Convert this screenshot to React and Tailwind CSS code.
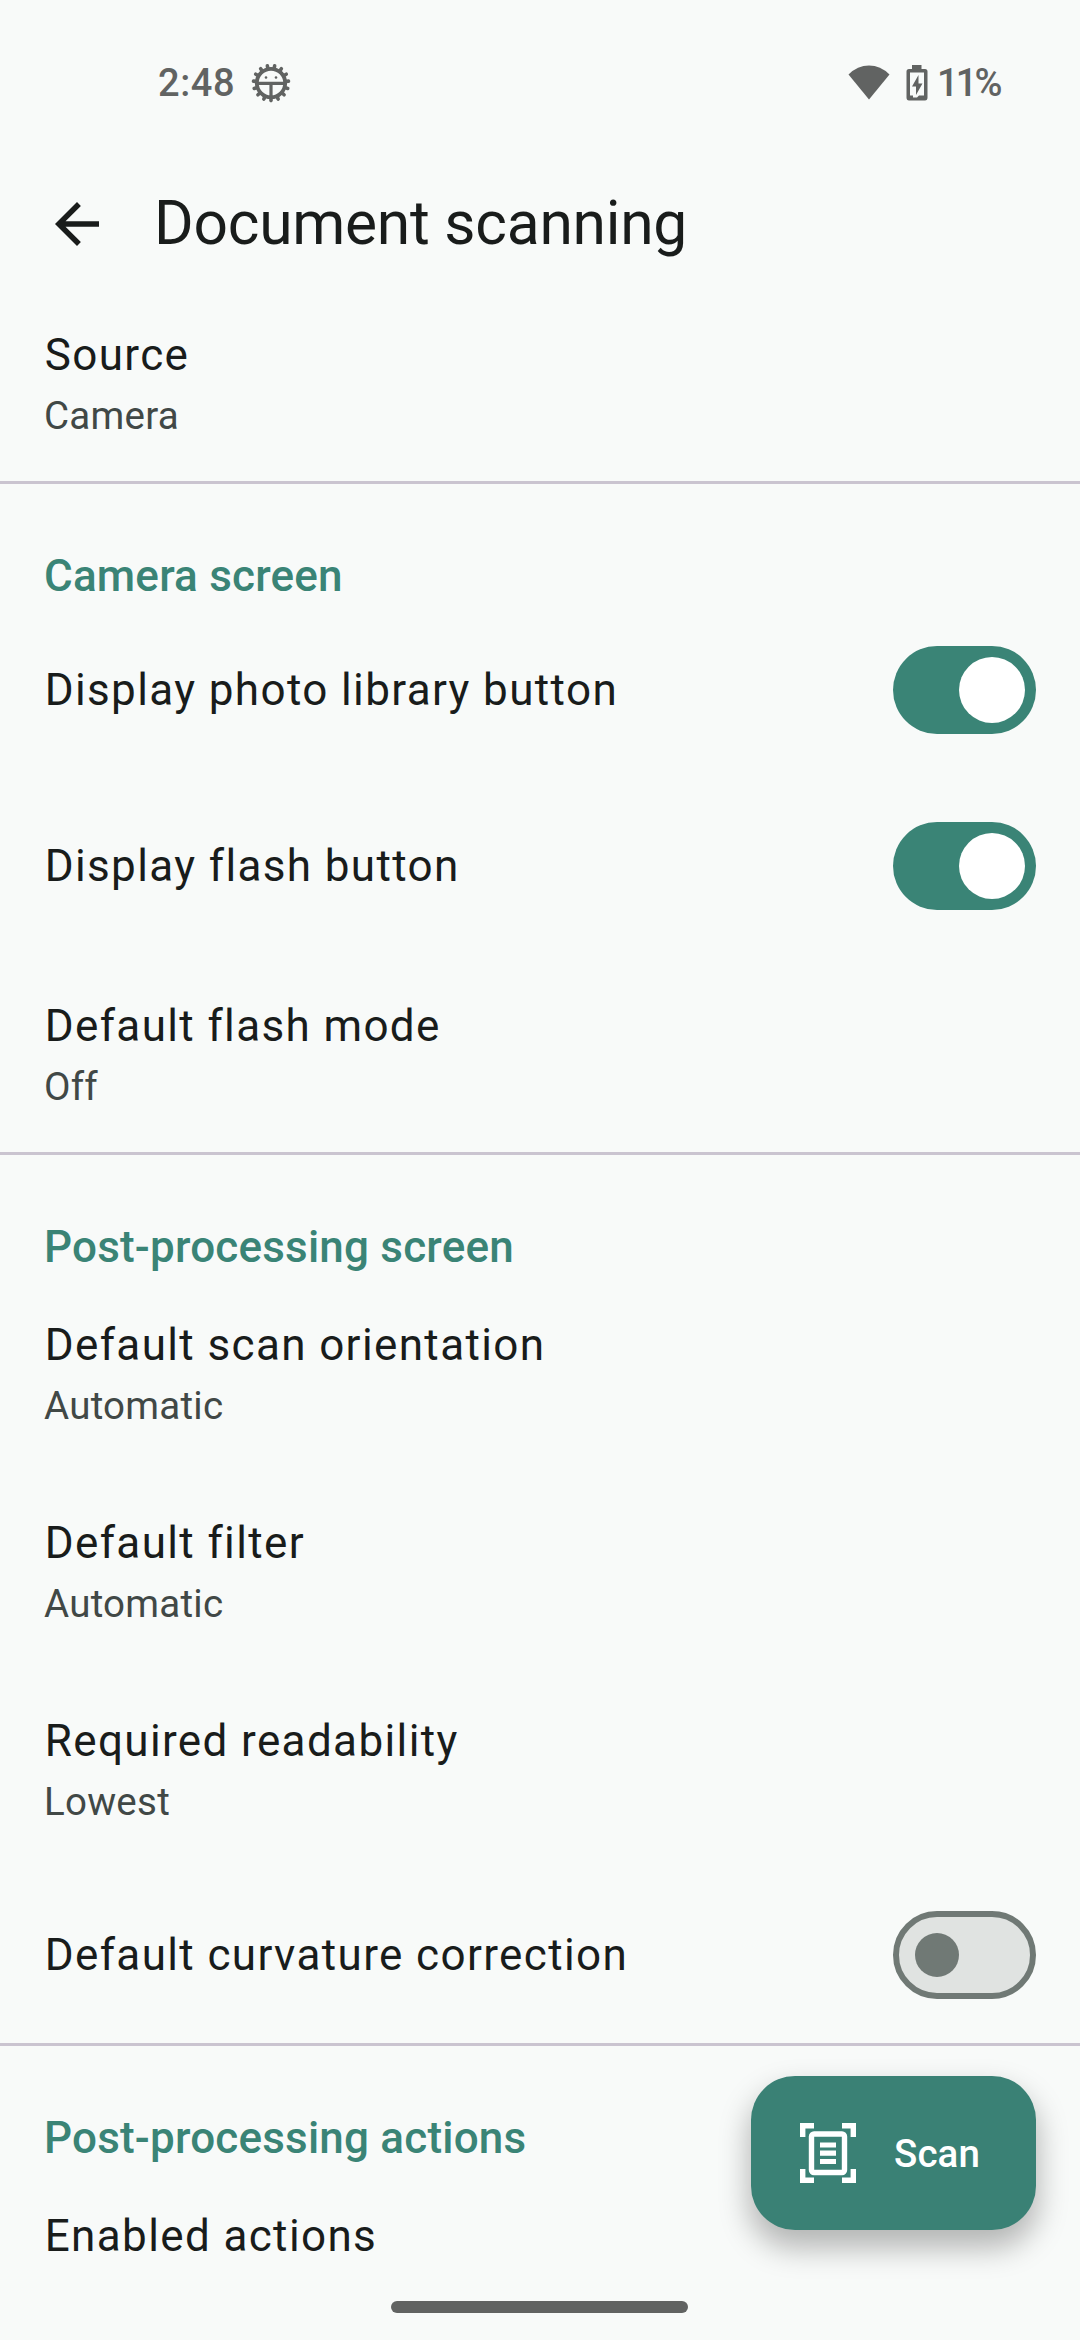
import React from 'react'

function Row({title, subtitle, children}){
  return (
    <div className={children ? 'h-[176px] px-[44px] flex items-center justify-between shrink-0' : 'h-[198px] px-[44px] pt-[38.5px] shrink-0'}>
      <div>
        <div className="pl-[0.7px] text-[44px] leading-[66px] tracking-[1.375px] text-[#191c1b]">{title}</div>
        {subtitle && <div className="text-[38.5px] leading-[55px] tracking-[0.25px] text-[#414846]">{subtitle}</div>}
      </div>
      {children}
    </div>
  )
}

function Toggle({on}){
  return on ? (
    <button className="w-[143px] h-[88px] rounded-full bg-[#3a8476] flex items-center justify-end pr-[11px]">
      <span className="size-[66px] rounded-full bg-white" />
    </button>
  ) : (
    <button className="w-[143px] h-[88px] rounded-full bg-[#e0e3e1] border-6 border-[#707975] flex items-center pl-4">
      <span className="size-[44px] rounded-full bg-[#707975]" />
    </button>
  )
}

function SectionTitle({children}){
  return (
    <h2 className="h-[121px] shrink-0 border-t-3 border-[#cac4d0] pt-[59px] px-[44px] text-[44px] leading-[66px] tracking-[0.2px] font-medium text-[#3a8476]">
      {children}
    </h2>
  )
}

function BugIcon(){
  const teeth = Array.from({length: 15}, (_, i) => 90 + i * 24)
  return (
    <svg className="size-[40px]" viewBox="0 0 40 40" fill="none" stroke="#616362">
      <circle cx="20" cy="20" r="14.2" strokeWidth="3.8" />
      {teeth.map(a => (
        <path key={a} d="M15 0h2.600" strokeWidth="3.6" strokeLinecap="round" transform={`translate(20 20) rotate(${a})`} />
      ))}
      <path d="M7 20.400h26M20 20.400v14" strokeWidth="3.200" />
      <circle cx="15" cy="14.500" r="1.3" fill="#616362" stroke="none" />
      <circle cx="25" cy="14.500" r="1.3" fill="#616362" stroke="none" />
    </svg>
  )
}

function StatusBar(){
  return (
    <div className="h-[140px] shrink-0 pt-[55px] pl-[158px] pr-[78px] flex items-start justify-between text-[#616362]">
      <div className="flex items-center">
        <span className="w-[93px] text-[38px] leading-[56px] font-medium tracking-[0.6px]">2:48</span>
        <BugIcon />
      </div>
      <div className="flex items-center">
        <svg className="w-[42px] h-[36px]" viewBox="0 0 42 36" fill="#616362">
          <path d="M0.500 9.500Q9.500 .500 21 .500T41.500 9.500L21 34.500Z" />
        </svg>
        <svg className="w-[22px] h-[36px] ml-[16px]" viewBox="0 0 22 36" fill="#616362">
          <path fillRule="evenodd" d="M6 0h9.500v4H19q2.500 0 2.500 2.500v26Q21.500 35.500 19 35.500H3Q.5 35.500.5 32.500v-26Q.5 4 3 4h3ZM4 7.500v23h3v2h4l2-2h5v-23Z" />
          <path d="M12.500 10 6 21.500h4v8.500L16.500 18.500h-4Z" />
        </svg>
        <span className="w-[65px] ml-[9px] text-[38px] leading-[56px] font-medium tracking-[-2.8px] whitespace-nowrap">11%</span>
      </div>
    </div>
  )
}

function ScanButton(){
  return (
    <button className="absolute left-[751px] top-[2076px] w-[285px] h-[154px] rounded-[44px] bg-[#3a8175] pl-[49px] flex items-center text-white shadow-[0_16px_30px_2px_rgba(0,0,0,0.28)]">
      <svg className="w-[56px] h-[60px]" viewBox="0 0 56 60" fill="none" stroke="#fff">
        <path d="M0 2.700h14M2.700 0v14M42 2.700h14M53.300 0v14M0 57.300h14M2.700 60V46M42 57.300h14M53.300 60V46" strokeWidth="5.400" />
        <rect x="11.500" y="11" width="33" height="38.500" rx="2.500" strokeWidth="5.400" />
        <path d="M20 22h16M20 30.200h16M20 38.500h16" strokeWidth="5.200" />
      </svg>
      <span className="ml-[38px] text-[38.5px] leading-[55px] tracking-[0.1px] font-medium">Scan</span>
    </button>
  )
}

export default function App(){
  return (
    <div className="relative w-[1080px] h-[2340px] overflow-hidden bg-[#f8faf9] font-['Roboto',sans-serif] flex flex-col">
      <StatusBar />
      <header className="h-[143px] shrink-0 pl-[44px] pt-[25px] flex items-center">
        <svg className="size-[66px]" viewBox="0 0 24 24" fill="#191c1b">
          <path d="M20 11H7.830l5.590-5.590L12 4l-8 8 8 8 1.410-1.410L7.830 13H20z" />
        </svg>
        <h1 className="ml-[44px] mb-[2px] text-[60.5px] leading-[77px] tracking-[-0.25px] text-[#191c1b]">Document scanning</h1>
      </header>
      <Row title="Source" subtitle="Camera" />
      <SectionTitle>Camera screen</SectionTitle>
      <Row title="Display photo library button"><Toggle on /></Row>
      <Row title="Display flash button"><Toggle on /></Row>
      <Row title="Default flash mode" subtitle="Off" />
      <SectionTitle>Post-processing screen</SectionTitle>
      <Row title="Default scan orientation" subtitle="Automatic" />
      <Row title="Default filter" subtitle="Automatic" />
      <Row title="Required readability" subtitle="Lowest" />
      <Row title="Default curvature correction"><Toggle /></Row>
      <SectionTitle>Post-processing actions</SectionTitle>
      <Row title="Enabled actions" />
      <ScanButton />
      <div className="absolute left-[391px] top-[2301px] w-[297px] h-[12px] rounded-full bg-[#616362]" />
    </div>
  )
}
